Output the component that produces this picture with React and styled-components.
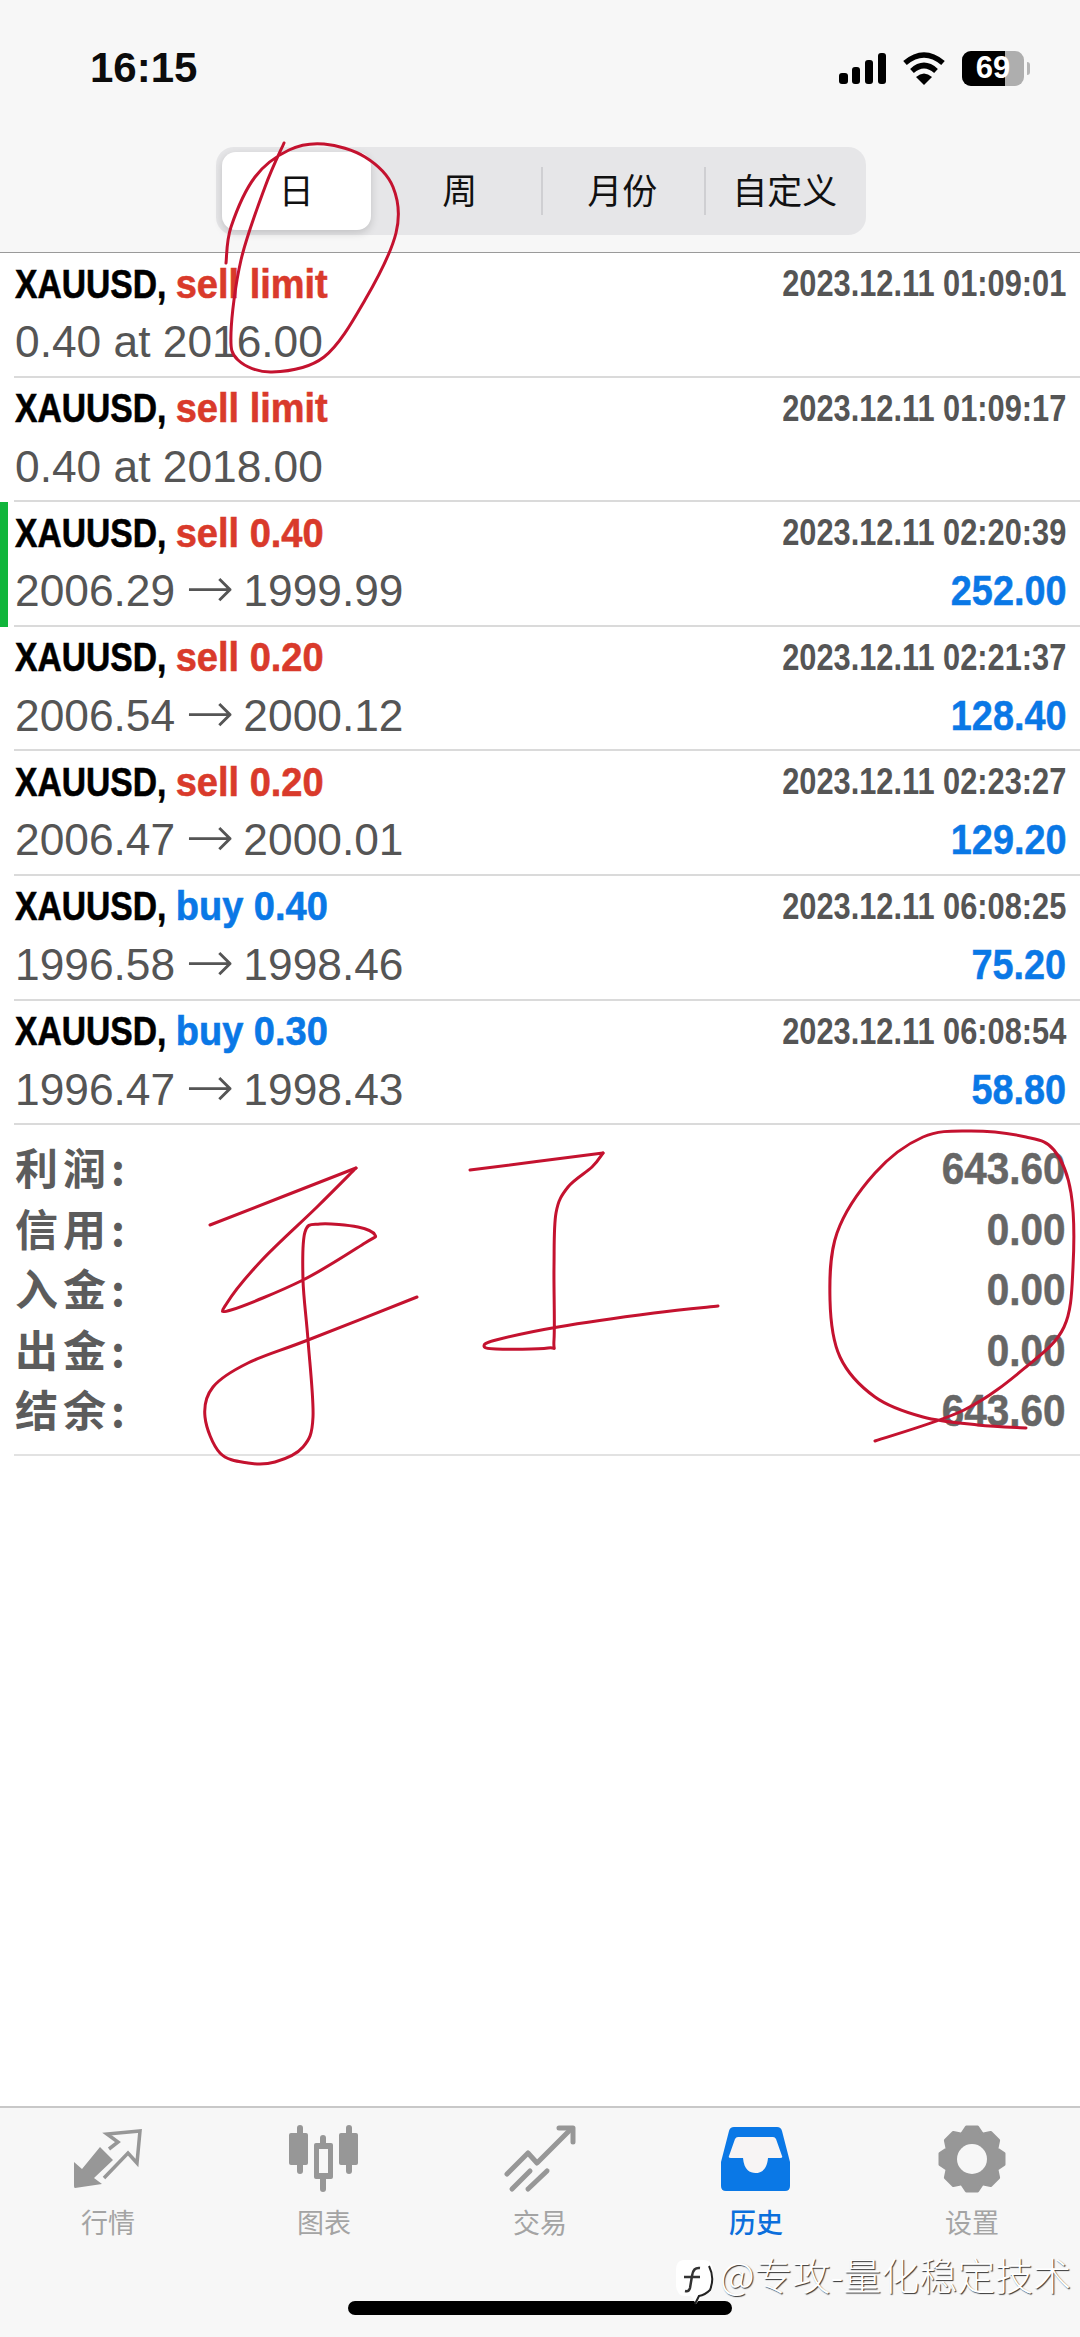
import * as React from "react";
import styled, { createGlobalStyle } from "styled-components";

const GlobalStyle = createGlobalStyle`
  html, body {
    margin: 0;
    padding: 0;
    background: #fff;
  }
`;

const SANS = `"Liberation Sans", Arial, sans-serif`;
const CJK = `"Noto Sans CJK SC", "Liberation Sans", sans-serif`;

const Page = styled.div`
  position: relative;
  width: 1080px;
  height: 2337px;
  display: flex;
  flex-direction: column;
  overflow: hidden;
  font-family: ${SANS};
`;

const Header = styled.header`
  box-sizing: border-box;
  height: 253px;
  background: #f7f7f7;
  border-bottom: 1px solid #9a9a9a;
`;

const StatusBar = styled.div`
  height: 136px;
  display: flex;
  align-items: center;
  justify-content: space-between;
  padding: 0 50px 0 90px;
`;

const Clock = styled.div`
  font-size: 42px;
  font-weight: 700;
  color: #0c0c0c;
`;

const StatusIcons = styled.div`
  display: flex;
  align-items: center;
  gap: 16px;
`;

const Battery = styled.div`
  position: relative;
  width: 62px;
  height: 35px;
  border-radius: 9px;
  background: #aeaeae;
  overflow: hidden;
`;

const BatteryFill = styled.div`
  height: 100%;
  background: #000;
`;

const BatteryText = styled.div`
  position: absolute;
  inset: 0;
  display: flex;
  align-items: center;
  justify-content: center;
  color: #fff;
  font-size: 31px;
  font-weight: 700;
`;

const BatteryWrap = styled.div`
  display: flex;
  align-items: center;
  gap: 3px;
`;

const BatteryCap = styled.div`
  width: 3px;
  height: 13px;
  border-radius: 0 3px 3px 0;
  background: #b5b5b5;
`;

const Segments = styled.div`
  box-sizing: border-box;
  width: 650px;
  height: 88px;
  margin: 11px 0 0 216px;
  padding: 5px 0;
  display: grid;
  grid-template-columns: repeat(4, 1fr);
  background: #e6e6e8;
  border-radius: 18px;
`;

const Segment = styled.div`
  position: relative;
  box-sizing: border-box;
  display: flex;
  align-items: center;
  justify-content: center;
  padding-bottom: 5px;
  font-family: ${CJK};
  font-size: 35px;
  color: #111;
  margin: ${(p) => (p.$active ? "0 8px 0 6px" : "0")};
  background: ${(p) => (p.$active ? "#fff" : "transparent")};
  border-radius: 14px;
  box-shadow: ${(p) => (p.$active ? "0 3px 8px rgba(0,0,0,0.16)" : "none")};

  &::before {
    content: "";
    display: ${(p) => (p.$divider ? "block" : "none")};
    position: absolute;
    left: 0;
    top: 15px;
    bottom: 15px;
    width: 2px;
    background: #cfcfd2;
  }
`;

const List = styled.main`
  flex: 1;
  background: #fff;
`;

const Row = styled.div`
  display: flex;
  height: 124.6px;
`;

const Marker = styled.div`
  width: 8px;
  flex: none;
  background: ${(p) => (p.$on ? "#10b53b" : "transparent")};
`;

const RowBody = styled.div`
  flex: 1;
  box-sizing: border-box;
  margin-left: 6px;
  padding: 2px 14px 0 1px;
  border-bottom: 2px solid #dadada;
`;

const Line = styled.div`
  height: 58px;
  display: flex;
  align-items: center;
  justify-content: space-between;
  white-space: nowrap;
`;

const Title = styled.div`
  font-size: 41px;
  font-weight: 700;
  color: #000;
  -webkit-text-stroke: 0.6px currentColor;
  transform: scaleX(0.82);
  transform-origin: left center;
`;

const Side = styled.span`
  display: inline-block;
  color: ${(p) => (p.$buy ? "#0a78e6" : "#d93a2b")};
  transform: scaleX(1.13);
  transform-origin: left center;
`;

const Stamp = styled.div`
  font-size: 36px;
  font-weight: 700;
  color: #555;
  transform: scaleX(0.855);
  transform-origin: right center;
`;

const Prices = styled.div`
  font-size: 44.3px;
  color: #555;
`;

const Arrow = styled.span`
  font-family: "DejaVu Sans", sans-serif;
  font-size: 58px;
  font-weight: 200;
  line-height: 40px;
  vertical-align: -2px;
  margin: 0 -3px 0 -2px;
`;

const Amount = styled.div`
  font-size: 42px;
  font-weight: 700;
  color: #0a78e6;
  -webkit-text-stroke: 0.5px currentColor;
  transform: scaleX(0.9);
  transform-origin: right center;
`;

const Summary = styled.section`
  box-sizing: border-box;
  margin-left: 14px;
  padding: 14px 14px 12px 1px;
  border-bottom: 2px solid #e2e2e2;
`;

const SummaryRow = styled.div`
  height: 60.5px;
  display: flex;
  align-items: center;
  justify-content: space-between;
`;

const SummaryLabel = styled.div`
  font-family: ${CJK};
  font-size: 43px;
  font-weight: 700;
  letter-spacing: 5px;
  color: #5c5c5c;
  margin-bottom: 6px;
`;

const SummaryValue = styled.div`
  font-size: 44px;
  font-weight: 700;
  color: #666;
  -webkit-text-stroke: 0.5px currentColor;
  transform: scaleX(0.92);
  transform-origin: right center;
`;

const TabBar = styled.footer`
  position: relative;
  box-sizing: border-box;
  height: 231px;
  background: #f7f7f7;
  border-top: 2px solid #c8c8c8;
  padding-top: 12px;
`;

const Tabs = styled.nav`
  display: grid;
  grid-template-columns: repeat(5, 216px);
`;

const Tab = styled.div`
  display: flex;
  flex-direction: column;
  align-items: center;
  color: ${(p) => (p.$active ? "#0a78e6" : "#979797")};
`;

const TabLabel = styled.div`
  font-family: ${CJK};
  font-size: 27px;
  line-height: 54px;
  font-weight: ${(p) => (p.$active ? 500 : 400)};
  color: ${(p) => (p.$active ? "#0b6fdc" : "#a4a4a4")};
`;

const HomeBar = styled.div`
  width: 384px;
  height: 14px;
  margin: 52px auto 0;
  border-radius: 7px;
  background: #000;
`;

const Watermark = styled.div`
  position: absolute;
  left: 675px;
  top: 144px;
  display: flex;
  align-items: flex-start;
  gap: 5px;
  font-family: ${CJK};
  font-size: 38px;
  font-weight: 300;
  line-height: 44px;
  color: #fff;
  text-shadow: 1px 1px 1px #333;
  white-space: nowrap;

  svg {
    margin-top: 6px;
  }
`;

const Ink = styled.svg`
  position: absolute;
  left: 0;
  top: 0;
  pointer-events: none;
`;

const trades = [
  { side: "sell limit", time: "01:09:01", prices: ["0.40 at 2016.00"] },
  { side: "sell limit", time: "01:09:17", prices: ["0.40 at 2018.00"] },
  { side: "sell 0.40", time: "02:20:39", prices: ["2006.29", "1999.99"], amount: "252.00", marked: true },
  { side: "sell 0.20", time: "02:21:37", prices: ["2006.54", "2000.12"], amount: "128.40" },
  { side: "sell 0.20", time: "02:23:27", prices: ["2006.47", "2000.01"], amount: "129.20" },
  { side: "buy 0.40", time: "06:08:25", prices: ["1996.58", "1998.46"], amount: "75.20", buy: true },
  { side: "buy 0.30", time: "06:08:54", prices: ["1996.47", "1998.43"], amount: "58.80", buy: true },
];

const totals = [
  ["利润:", "643.60"],
  ["信用:", "0.00"],
  ["入金:", "0.00"],
  ["出金:", "0.00"],
  ["结余:", "643.60"],
];

// catmull-rom through the points, good enough for pen strokes
const smooth = (pts) => {
  let d = `M${pts[0][0]} ${pts[0][1]}`;
  for (let i = 0; i < pts.length - 1; i++) {
    const p0 = pts[i - 1] || pts[i];
    const p1 = pts[i];
    const p2 = pts[i + 1];
    const p3 = pts[i + 2] || p2;
    const c1 = [p1[0] + (p2[0] - p0[0]) / 6, p1[1] + (p2[1] - p0[1]) / 6];
    const c2 = [p2[0] - (p3[0] - p1[0]) / 6, p2[1] - (p3[1] - p1[1]) / 6];
    d += ` C${c1[0]} ${c1[1]} ${c2[0]} ${c2[1]} ${p2[0]} ${p2[1]}`;
  }
  return d;
};

const strokes = [
  [[284, 143], [265, 187], [241, 260], [231, 333], [238, 360], [272, 372], [324, 357], [365, 300], [396, 233], [393, 187], [365, 157], [324, 144], [289, 150], [255, 177], [231, 227], [226, 263]],
  [[210, 1225], [356, 1168]],
  [[356, 1168], [317, 1207], [262, 1260], [227, 1303], [231, 1310], [303, 1280], [365, 1243], [375, 1235], [358, 1227], [320, 1224], [305, 1232], [303, 1280], [308, 1340], [313, 1417], [303, 1447], [275, 1462], [248, 1463], [220, 1453], [205, 1417], [213, 1387], [248, 1363], [308, 1340], [417, 1297]],
  [[470, 1170], [603, 1153]],
  [[603, 1153], [592, 1167], [568, 1187], [556, 1213], [554, 1267], [554, 1340], [548, 1348], [496, 1349], [484, 1346], [496, 1340], [558, 1327], [654, 1313], [718, 1306]],
  [[1026, 1428], [978, 1425], [923, 1417], [875, 1397], [840, 1357], [830, 1300], [837, 1233], [875, 1173], [923, 1137], [971, 1131], [1026, 1137], [1054, 1150], [1071, 1193], [1073, 1267], [1064, 1327], [1026, 1367], [964, 1410], [875, 1441]],
];

const gearPoints = () => {
  const out = [];
  for (let i = 0; i < 8; i++) {
    const a = i * 45 - 90;
    [[a - 10, 32.5], [a + 10, 32.5], [a + 22.5, 27]].forEach(([deg, r]) => {
      const rad = (deg * Math.PI) / 180;
      out.push(`${(72 + r * Math.cos(rad)).toFixed(1)},${(49 + r * Math.sin(rad)).toFixed(1)}`);
    });
  }
  return out.join(" ");
};

const SignalIcon = () => (
  <svg width="47" height="31" viewBox="0 0 47 31" fill="#000">
    <rect x="0" y="20" width="9" height="11" rx="3" />
    <rect x="13" y="14" width="8" height="17" rx="3" />
    <rect x="26" y="7" width="8" height="24" rx="3" />
    <rect x="39" y="0" width="8" height="31" rx="3" />
  </svg>
);

const WifiIcon = () => (
  <svg width="44" height="33" viewBox="0 0 44 33">
    <path d="M3 11 Q22 -5 41 11" fill="none" stroke="#000" strokeWidth="5.5" />
    <path d="M10 19 Q22 8 34 19" fill="none" stroke="#000" strokeWidth="5.5" />
    <path d="M22 33 L14 25 Q22 18 30 25Z" fill="#000" />
  </svg>
);

const MarketIcon = () => (
  <svg width="80" height="75" viewBox="18 10 80 75">
    <path d="M24 52 L32 59 L50 37 L63 50 L44 68 L52 74 L25 78 Q24 78 24 76Z" fill="currentColor" />
    <path d="M59 39 L68 32 L57 24 L90 21 L87 53 L78 43 L54 68" fill="none" stroke="currentColor" strokeWidth="3.5" />
  </svg>
);

const ChartIcon = () => (
  <svg width="80" height="75" viewBox="284 10 80 75" fill="currentColor">
    <rect x="297" y="15" width="6" height="49" rx="3" />
    <rect x="289" y="23" width="19" height="32" rx="2" />
    <rect x="346" y="15" width="6" height="49" rx="3" />
    <rect x="339" y="23" width="19" height="32" rx="2" />
    <rect x="320" y="25" width="6" height="57" rx="3" />
    <rect x="314" y="33" width="19" height="36" rx="2" />
    <rect x="319" y="39" width="9" height="24" fill="#f7f7f7" />
  </svg>
);

const TradeIcon = () => (
  <svg width="80" height="75" viewBox="20 10 80 75" fill="none" stroke="currentColor" strokeWidth="5" strokeLinecap="round" strokeLinejoin="round">
    <path d="M27 64 L48 43 L57 53 L90 20" />
    <path d="M79 18 L93 18 L93 32" />
    <path d="M32 79 L50 61" />
    <path d="M48 79 L67 61" />
  </svg>
);

const HistoryIcon = () => (
  <svg width="80" height="75" viewBox="1 0 80 75">
    <path d="M19 7 H62 Q66 7 67 11 L75 42 V66 Q75 71 70 71 H11 Q6 71 6 66 V42 L14 11 Q15 7 19 7Z" fill="currentColor" />
    <path d="M23 17 H58 Q60 17 61 19 L67 36 Q68 38 65 38 H53 C52 50 46 53 40.5 53 C35 53 29 50 28 38 H16 Q13 38 14 36 L20 19 Q21 17 23 17Z" fill="#f7f4f4" />
  </svg>
);

const GearIcon = () => (
  <svg width="80" height="75" viewBox="32 10 80 75">
    <polygon points={gearPoints()} fill="currentColor" stroke="currentColor" strokeWidth="3" strokeLinejoin="round" />
    <circle cx="72" cy="49" r="15" fill="#f7f7f7" />
  </svg>
);

const ZhihuLogo = () => (
  <svg width="40" height="50" viewBox="0 0 40 50">
    <path d="M8 2 H28 Q38 2 38 13 V26 Q38 36 28 37 L21 46 L16 38 H10 Q2 38 1 28 V12 Q1 3 8 2Z" fill="#fff" />
    <path d="M34 8 Q40 20 35 32 Q30 37 24 38 L20 46" fill="none" stroke="#222" strokeWidth="2" />
    <path d="M25 10 Q18 9 17 18 L15 30 Q14 34 10 33 M9 19 H25" fill="none" stroke="#333" strokeWidth="2.5" />
  </svg>
);

const tabs = [
  { label: "行情", Icon: MarketIcon },
  { label: "图表", Icon: ChartIcon },
  { label: "交易", Icon: TradeIcon },
  { label: "历史", Icon: HistoryIcon, active: true },
  { label: "设置", Icon: GearIcon },
];

const App = () => {
  return (
    <Page>
      <GlobalStyle />
      <Header>
        <StatusBar>
          <Clock>16:15</Clock>
          <StatusIcons>
            <SignalIcon />
            <WifiIcon />
            <BatteryWrap>
              <Battery>
                <BatteryFill style={{ width: "69%" }} />
                <BatteryText>69</BatteryText>
              </Battery>
              <BatteryCap />
            </BatteryWrap>
          </StatusIcons>
        </StatusBar>
        <Segments>
          <Segment $active>日</Segment>
          <Segment>周</Segment>
          <Segment $divider>月份</Segment>
          <Segment $divider>自定义</Segment>
        </Segments>
      </Header>

      <List>
        {trades.map((t) => (
          <Row key={t.time}>
            <Marker $on={t.marked} />
            <RowBody>
              <Line>
                <Title>
                  XAUUSD, <Side $buy={t.buy}>{t.side}</Side>
                </Title>
                <Stamp>2023.12.11 {t.time}</Stamp>
              </Line>
              <Line>
                <Prices>
                  {t.prices[0]}
                  {t.prices[1] && (
                    <>
                      {" "}<Arrow>→</Arrow> {t.prices[1]}
                    </>
                  )}
                </Prices>
                {t.amount && <Amount>{t.amount}</Amount>}
              </Line>
            </RowBody>
          </Row>
        ))}
        <Summary>
          {totals.map(([label, value]) => (
            <SummaryRow key={label}>
              <SummaryLabel>{label}</SummaryLabel>
              <SummaryValue>{value}</SummaryValue>
            </SummaryRow>
          ))}
        </Summary>
      </List>

      <TabBar>
        <Tabs>
          {tabs.map(({ label, Icon, active }) => (
            <Tab key={label} $active={active}>
              <Icon />
              <TabLabel $active={active}>{label}</TabLabel>
            </Tab>
          ))}
        </Tabs>
        <HomeBar />
        <Watermark>
          <ZhihuLogo />
          @专攻-量化稳定技术
        </Watermark>
      </TabBar>

      <Ink width="1080" height="2337" viewBox="0 0 1080 2337" fill="none" stroke="#c4122f" strokeWidth="3" strokeLinecap="round" strokeLinejoin="round">
        {strokes.map((pts, i) => (
          <path key={i} d={smooth(pts)} />
        ))}
      </Ink>
    </Page>
  );
};

export default App;
